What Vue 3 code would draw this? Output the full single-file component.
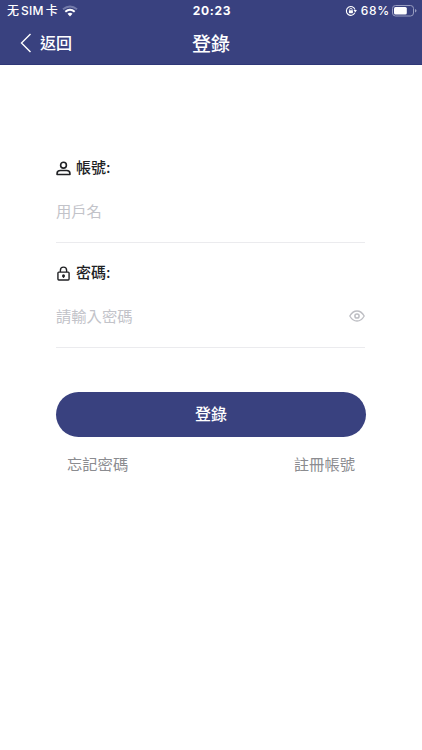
<script setup>
import { ref } from 'vue'

const username = ref('')
const password = ref('')
const visible = ref(false)
</script>

<template>
  <main class="screen">
    <header class="top">
      <div class="status">
        <div class="carrier">
          <span class="network"><span>无</span><span class="sim">SIM</span><span>卡</span></span>
          <svg class="wifi" viewBox="0 0 16 12">
            <path d="M1 4.3Q8-1.4 15 4.3" stroke="#747baa" stroke-width="2" fill="none" />
            <path d="M3.3 6.7Q8 2.8 12.7 6.7" stroke="#fff" stroke-width="2.1" fill="none" />
            <path d="M5.5 8.8Q8 6.9 10.5 8.8L8 11.4Z" fill="#fff" />
          </svg>
        </div>
        <time class="clock">20:23</time>
        <div class="power">
          <svg class="rotation" viewBox="0 0 12 12">
            <path d="M9.8 7.8A4.4 4.4 0 1 1 10 4.6" fill="none" stroke="#fff" stroke-width="1.1" />
            <path d="M8.5 5h3.4L10.3 7.5Z" fill="#fff" />
            <rect x="3.9" y="5.2" width="4" height="3" rx=".4" fill="#fff" />
            <path d="M4.7 5.3V4.5a1.2 1.2 0 0 1 2.4 0v.8" fill="none" stroke="#fff" stroke-width=".8" />
          </svg>
          <span class="percent">68%</span>
          <svg class="battery" viewBox="0 0 25 12">
            <rect x=".5" y=".5" width="21" height="10.5" rx="3" fill="none" stroke="#989dc0" />
            <rect x="2" y="2" width="12.8" height="7.5" rx="1.5" fill="#fff" />
            <path d="M23 4q1.5 .5 1.5 1.8T23 7.6Z" fill="#989dc0" />
          </svg>
        </div>
      </div>
      <nav class="navigation">
        <a class="back">
          <svg class="chevron" viewBox="0 0 12 20"><path d="M10.5 1 1.5 10l9 9" fill="none" stroke="#fff" stroke-width="1.4" /></svg>
          <span>返回</span>
        </a>
        <h1>登錄</h1>
      </nav>
    </header>

    <form class="login" @submit.prevent>
      <div class="field">
        <label for="username">
          <svg class="label-icon" viewBox="0 0 14 14">
            <g fill="none" stroke="#202124" stroke-width="1.5">
              <circle cx="7" cy="3.9" r="2.7" />
              <path d="M1 12.6v-1c0-1.7 1.4-2.7 3.1-2.7h5.8c1.7 0 3.1 1 3.1 2.7v1Z" stroke-linejoin="round" />
            </g>
          </svg>
          <span>帳號:</span>
        </label>
        <div class="entry">
          <input id="username" v-model="username" type="text" placeholder="用戶名" />
        </div>
      </div>
      <div class="field">
        <label for="password">
          <svg class="label-icon" viewBox="0 0 14 14">
            <g fill="none" stroke="#202124" stroke-width="1.3">
              <rect x="1.8" y="5.7" width="10.4" height="7.3" rx=".8" />
              <path d="M4.1 5.5V3.9a2.9 2.9 0 0 1 5.8 0v1.6" />
            </g>
            <circle cx="7" cy="9.2" r="1.4" fill="#202124" />
            <path d="M7 9.2v1.9" stroke="#202124" stroke-width="1.2" />
          </svg>
          <span>密碼:</span>
        </label>
        <div class="entry">
          <input id="password" v-model="password" :type="visible ? 'text' : 'password'" placeholder="請輸入密碼" />
          <svg class="eye" viewBox="0 0 16 12" @click="visible = !visible">
            <path d="M.8 6Q3.6 1 8 1T15.2 6Q12.4 11 8 11T.8 6Z" fill="none" stroke="#bdbec3" stroke-width="1.3" />
            <circle cx="8" cy="6" r="2.1" fill="none" stroke="#bdbec3" stroke-width="1.5" />
          </svg>
        </div>
      </div>
      <button type="submit">登錄</button>
      <div class="links"><a>忘記密碼</a><a>註冊帳號</a></div>
    </form>
  </main>
</template>

<style>
body {
  margin: 0;
  background: #fff;
}
</style>

<style scoped>
.screen {
  width: 100%;
  height: 750px;
  overflow: hidden;
  background: #fff;
  color: #202124;
  font-family: Inter, "Noto Sans CJK TC", sans-serif;
}
.top {
  height: 65px;
  box-sizing: border-box;
  background: #39417f;
  border-bottom: 1px solid #2f3777;
  color: #fff;
}
.status {
  display: grid;
  grid-template-columns: 1fr auto 1fr;
  align-items: center;
  height: 21px;
  padding: 0 5px 0 7px;
  font-size: 12px;
  line-height: 20px;
}
.carrier, .power, .network {
  display: flex;
  align-items: center;
}
.network {
  gap: 2px;
  font-family: Inter, "Noto Sans CJK SC", sans-serif;
  font-weight: 500;
}
.sim {
  font-size: 12px;
  letter-spacing: .25px;
}
.wifi {
  width: 16px;
  height: 12px;
  margin-left: 4px;
}
.clock {
  padding-top: 1px;
  font-size: 12px;
  font-weight: 700;
  letter-spacing: .75px;
}
.power {
  justify-content: flex-end;
}
.rotation {
  width: 12px;
  height: 12px;
  margin-right: -1px;
}
.percent {
  margin: 1px 2px 0 5px;
  font-weight: 500;
  font-size: 12px;
  letter-spacing: .7px;
}
.battery {
  width: 25px;
  height: 12px;
}
.navigation {
  display: grid;
  grid-template-columns: 1fr auto 1fr;
  align-items: center;
  height: 43px;
  padding: 0 20px;
}
.back {
  display: flex;
  align-items: center;
  gap: 8px;
  font-size: 16px;
  line-height: 22px;
  font-weight: 500;
}
.chevron {
  width: 12px;
  height: 20px;
}
h1 {
  margin: 4px 0 0;
  font-size: 19px;
  line-height: 28px;
  font-weight: 500;
}
.login {
  padding: 91px 56px 0;
}
.field {
  height: 105px;
}
label {
  display: flex;
  align-items: center;
  gap: 5px;
  height: 24px;
  font-size: 15px;
  line-height: 22px;
  font-weight: 500;
}
.label-icon {
  width: 15px;
  height: 15px;
}
.entry {
  display: flex;
  align-items: center;
  height: 62px;
  margin-right: 1px;
  border-bottom: 1px solid #ebebee;
}
input {
  flex: 1;
  min-width: 0;
  padding: 2px 0 0;
  border: 0;
  outline: 0;
  background: transparent;
  color: #202124;
  font: 400 15.3px/24px Inter, "Noto Sans CJK TC", sans-serif;
}
input::placeholder {
  color: #c2c3c9;
  opacity: 1;
}
.eye {
  width: 16px;
  height: 12px;
}
button {
  display: block;
  width: 100%;
  height: 45px;
  margin-top: 26px;
  padding: 0 0 2px;
  border: 0;
  border-radius: 23px;
  background: #39417f;
  color: #fff;
  font: 500 16px/24px Inter, "Noto Sans CJK TC", sans-serif;
}
.links {
  display: flex;
  justify-content: space-between;
  padding: 16px 11px 0;
  color: #8b8c90;
  font-size: 15.3px;
  line-height: 24px;
}
</style>
